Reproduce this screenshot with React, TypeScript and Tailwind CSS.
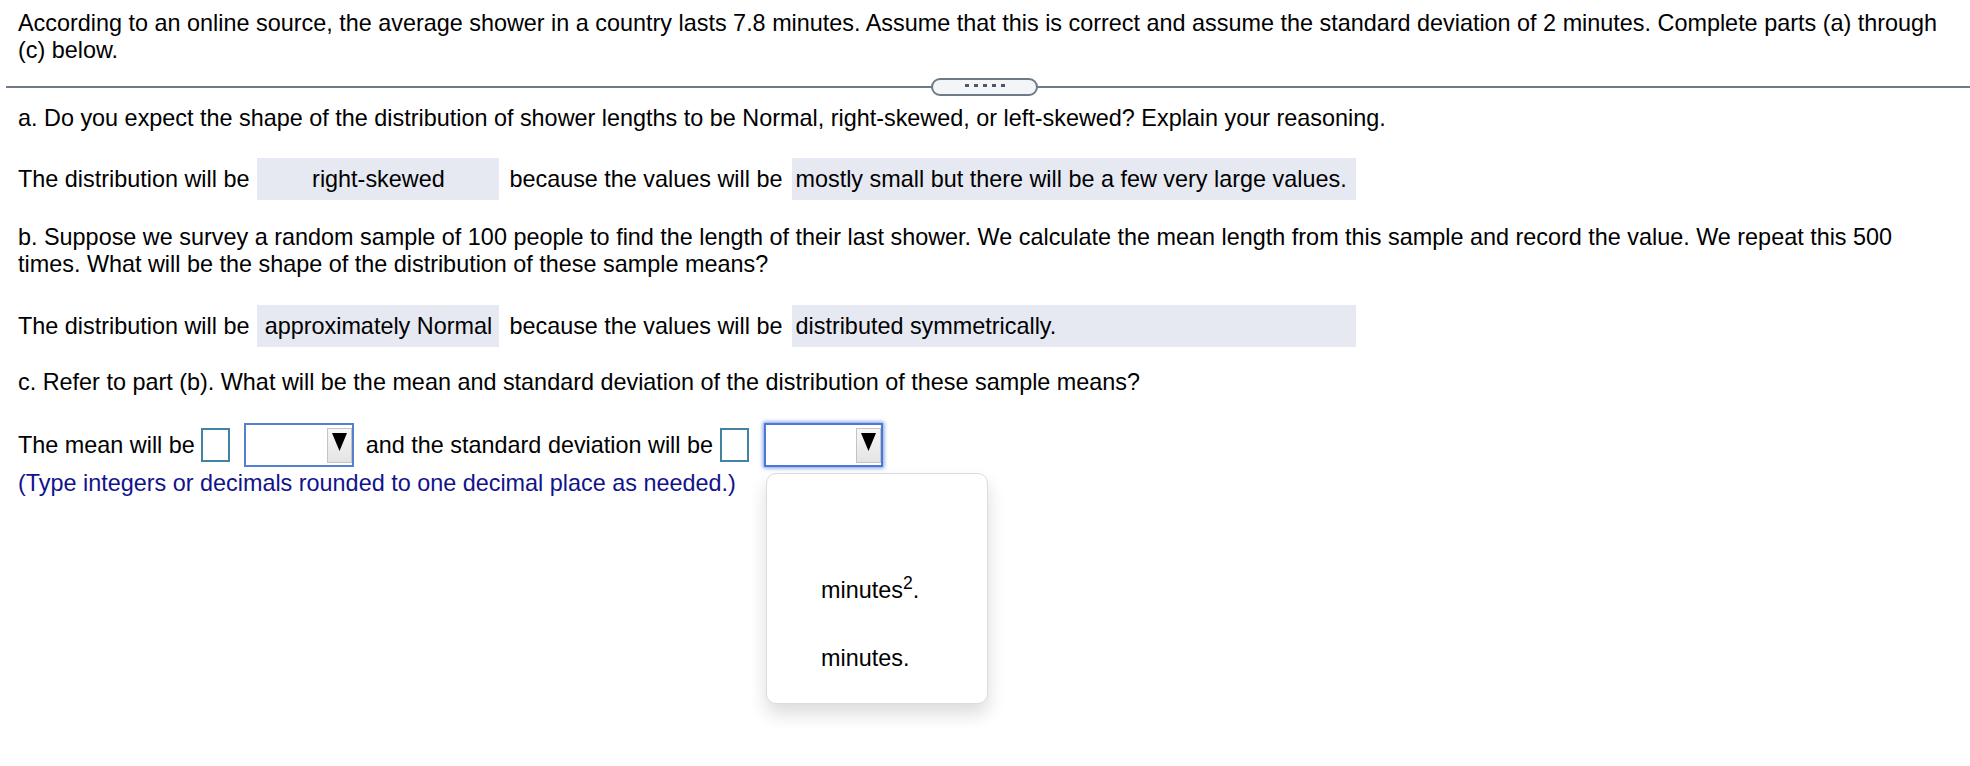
import React from "react";

function Arrow() {
  return (
    <div className="w-[25px] h-[35px] flex items-start justify-center pt-[4px] bg-gradient-to-b from-[#f7f7f7] to-[#e4e4e4] border border-[#c4c4c4] box-border">
      <svg width="15" height="18" viewBox="0 0 15 18">
        <polygon points="0,0 15,0 7.5,18" fill="#000" />
      </svg>
    </div>
  );
}

export default function App() {
  return (
    <div className="relative w-[1970px] h-[766px] bg-white text-black font-['Liberation_Sans',Arial,sans-serif] text-[23.4px] leading-[27px] overflow-hidden">
      <p className="pt-[10px] pl-[18px] pr-[8px]">
        According to an online source, the average shower in a country lasts 7.8 minutes. Assume that this is correct and assume the standard deviation of 2 minutes. Complete parts (a) through (c) below.
      </p>

      <div className="relative mt-[22px] ml-[6px] h-[2px] bg-[#6e7a86]">
        <div className="absolute left-[925px] top-[-8px] w-[107px] h-[18px] rounded-full border-2 border-[#6e7a86] bg-[#f3f5f8] box-border flex items-center justify-center">
          <div className="flex gap-[5px] mb-[3px]">
            <span className="w-[4px] h-[3px] bg-[#4d5763]" />
            <span className="w-[4px] h-[3px] bg-[#4d5763]" />
            <span className="w-[4px] h-[3px] bg-[#4d5763]" />
            <span className="w-[4px] h-[3px] bg-[#4d5763]" />
            <span className="w-[4px] h-[3px] bg-[#4d5763]" />
          </div>
        </div>
      </div>

      <div className="pl-[18px] pr-[8px]">
        <p className="mt-[17px]">
          a. Do you expect the shape of the distribution of shower lengths to be Normal, right-skewed, or left-skewed? Explain your reasoning.
        </p>

        <div className="mt-[26px] flex items-center h-[42px] whitespace-nowrap">
          <span>The distribution will be</span>
          <span className="ml-[8px] w-[242px] h-[42px] bg-[#e6e9f2] flex items-center justify-center">right-skewed</span>
          <span className="ml-[10px]">because the values will be</span>
          <span className="ml-[10px] w-[564px] h-[42px] bg-[#e6e9f2] flex items-center pl-[3px]">
            mostly small but there will be a few very large values.
          </span>
        </div>

        <p className="mt-[24px] pr-[30px]">
          b. Suppose we survey a random sample of 100 people to find the length of their last shower. We calculate the mean length from this sample and record the value. We repeat this 500 times. What will be the shape of the distribution of these sample means?
        </p>

        <div className="mt-[27px] flex items-center h-[42px] whitespace-nowrap">
          <span>The distribution will be</span>
          <span className="ml-[8px] w-[242px] h-[42px] bg-[#e6e9f2] flex items-center justify-center">approximately Normal</span>
          <span className="ml-[10px]">because the values will be</span>
          <span className="ml-[10px] w-[564px] h-[42px] bg-[#e6e9f2] flex items-center pl-[3px]">
            distributed symmetrically.
          </span>
        </div>

        <p className="mt-[22px]">
          c. Refer to part (b). What will be the mean and standard deviation of the distribution of these sample means?
        </p>

        <div className="mt-[27px] flex items-center h-[44px] whitespace-nowrap">
          <span>The mean will be</span>
          <span className="ml-[6px] w-[29px] h-[34px] border-2 border-[#4282a3] box-border" />
          <div className="ml-[14px] w-[110px] h-[44px] border-2 border-[#5580d0] box-border flex items-center justify-end">
            <Arrow />
          </div>
          <span className="ml-[12px]">and the standard deviation will be</span>
          <span className="ml-[7px] w-[29px] h-[34px] border-2 border-[#4282a3] box-border" />
          <div className="relative ml-[15px] w-[119px] h-[44px] border-2 border-[#4a78d6] box-border flex items-center justify-end shadow-[0_0_4px_1px_rgba(70,120,215,0.75)]">
            <Arrow />
            <div className="absolute left-[0px] top-[48px] w-[222px] h-[231px] box-border bg-white border border-[#dcdcdc] rounded-[10px] shadow-[0_10px_18px_rgba(0,0,0,0.14)] pt-[14px] flex flex-col z-10">
              <div className="h-[68px]" />
              <div className="h-[68px] flex items-center pl-[54px]">
                <span>
                  minutes<sup>2</sup>.
                </span>
              </div>
              <div className="h-[68px] flex items-center pl-[54px]">
                <span>minutes.</span>
              </div>
            </div>
          </div>
        </div>

        <p className="mt-[3px] text-[#12128c]">(Type integers or decimals rounded to one decimal place as needed.)</p>
      </div>
    </div>
  );
}
